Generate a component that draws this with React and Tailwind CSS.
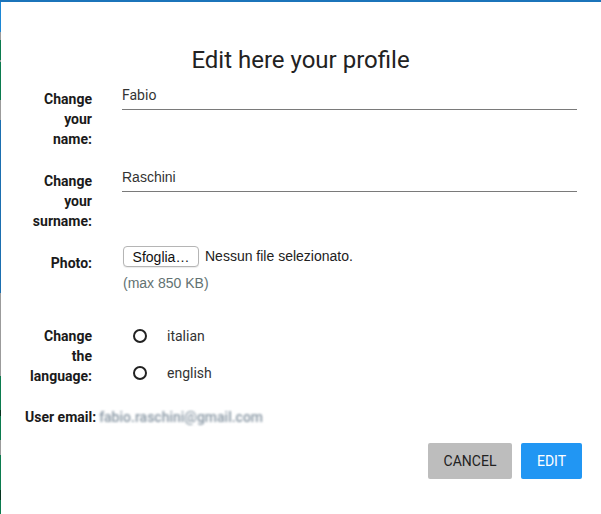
import React from 'react';

const strip = [
  { h: 30, c: 'bg-[#1c86d4]' },
  { h: 8, c: 'bg-[#9b9b9b]' },
  { h: 20, c: 'bg-[#0b7b4e]' },
  { h: 2, c: 'bg-[#9b9b9b]' },
  { h: 38, c: 'bg-[#0b7b4e]' },
  { h: 20, c: 'bg-[#9b9b9b]' },
  { h: 173, c: 'bg-[#1b6fb0]' },
  { h: 83, c: 'bg-[#9b9b9b]' },
  { h: 34, c: 'bg-[#0b7b4e]' },
  { h: 6, c: 'bg-[#06331f]' },
  { h: 24, c: 'bg-[#0b7b4e]' },
  { h: 15, c: 'bg-[#9b9b9b]' },
  { h: 35, c: 'bg-[#0b7b4e]' },
  { h: 10, c: 'bg-[#06331f]' },
  { h: 14, c: 'bg-[#0b7b4e]' },
];

function Label({ children }) {
  return (
    <div className="w-[68px] shrink-0 pt-[7px] text-right text-[14px] font-bold leading-5 text-[#1a1a1a]">
      {children}
    </div>
  );
}

function TextField({ value, mac }) {
  return (
    <div className="flex h-[28px] items-center border-b border-[#7a7a7a]">
      <span
        className={
          'text-[14px] text-[#333] ' +
          (mac ? "font-['Liberation_Sans',sans-serif]" : '')
        }
      >
        {value}
      </span>
    </div>
  );
}

function Radio({ label }) {
  return (
    <div className="flex h-5 items-center">
      <span className="ml-[11px] h-[14px] w-[14px] rounded-full border-2 border-[#222]" />
      <span className="ml-[20px] text-[14px] text-[#333]">{label}</span>
    </div>
  );
}

export default function App() {
  return (
    <div className="flex h-[514px] w-[601px] flex-col overflow-hidden bg-white font-['Roboto',sans-serif]">
      <div className="h-[2px] w-full bg-[#1b74ba]" />
      <div className="flex flex-1">
        <div className="flex w-px flex-col">
          {strip.map((s, i) => (
            <div key={i} className={s.c} style={{ height: s.h }} />
          ))}
        </div>
        <div className="flex-1 pl-[23px] pr-[24px]">
          <h2 className="mt-[42px] text-center text-[24px] leading-8 text-[#222]">
            Edit here your profile
          </h2>

          {/* name */}
          <div className="mt-[6px] flex">
            <Label>Change your name:</Label>
            <div className="ml-[30px] flex-1">
              <TextField value="Fabio" />
            </div>
          </div>

          {/* surname */}
          <div className="mt-[15px] flex">
            <Label>Change your surname:</Label>
            <div className="ml-[30px] flex-1">
              <TextField value="Raschini" mac />
            </div>
          </div>

          {/* photo */}
          <div className="mt-[15px] flex">
            <Label>Photo:</Label>
            <div className="ml-[30px] flex-1 font-['Liberation_Sans',sans-serif]">
              <div className="flex items-center">
                <button className="ml-px h-[21px] w-[76px] rounded-[4px] border border-[#b5b5b5] bg-white text-[14px] leading-none text-[#111] shadow-[0_1px_1px_rgba(0,0,0,0.08)]">
                  Sfoglia…
                </button>
                <span className="ml-[6px] text-[14px] text-[#222]">Nessun file selezionato.</span>
              </div>
              <div className="ml-px mt-[6px] text-[14px] leading-5 text-[#637272]">(max 850 KB)</div>
            </div>
          </div>

          {/* language */}
          <div className="mt-[26px] flex">
            <Label>Change the language:</Label>
            <div className="ml-[30px] flex flex-1 flex-col gap-[17px] pt-[7px]">
              <Radio label="italian" />
              <Radio label="english" />
            </div>
          </div>

          {/* email */}
          <div className="mt-[21px] flex items-center text-[14px] leading-5">
            <span className="ml-[1px] font-bold text-[#1a1a1a]">User email:</span>
            <span className="ml-[3px] font-medium text-[#8796a3] blur-[1px]">fabio.raschini@gmail.com</span>
          </div>

          {/* actions */}
          <div className="mt-[16px] flex justify-end gap-[9px]">
            <button className="h-[36px] w-[84px] rounded-[2px] bg-[#bdbdbd] text-[14px] uppercase text-[#222]">
              Cancel
            </button>
            <button className="-mr-[5px] h-[36px] w-[61px] rounded-[2px] bg-[#2196f3] text-[14px] uppercase text-white">
              Edit
            </button>
          </div>
        </div>
      </div>
    </div>
  );
}
